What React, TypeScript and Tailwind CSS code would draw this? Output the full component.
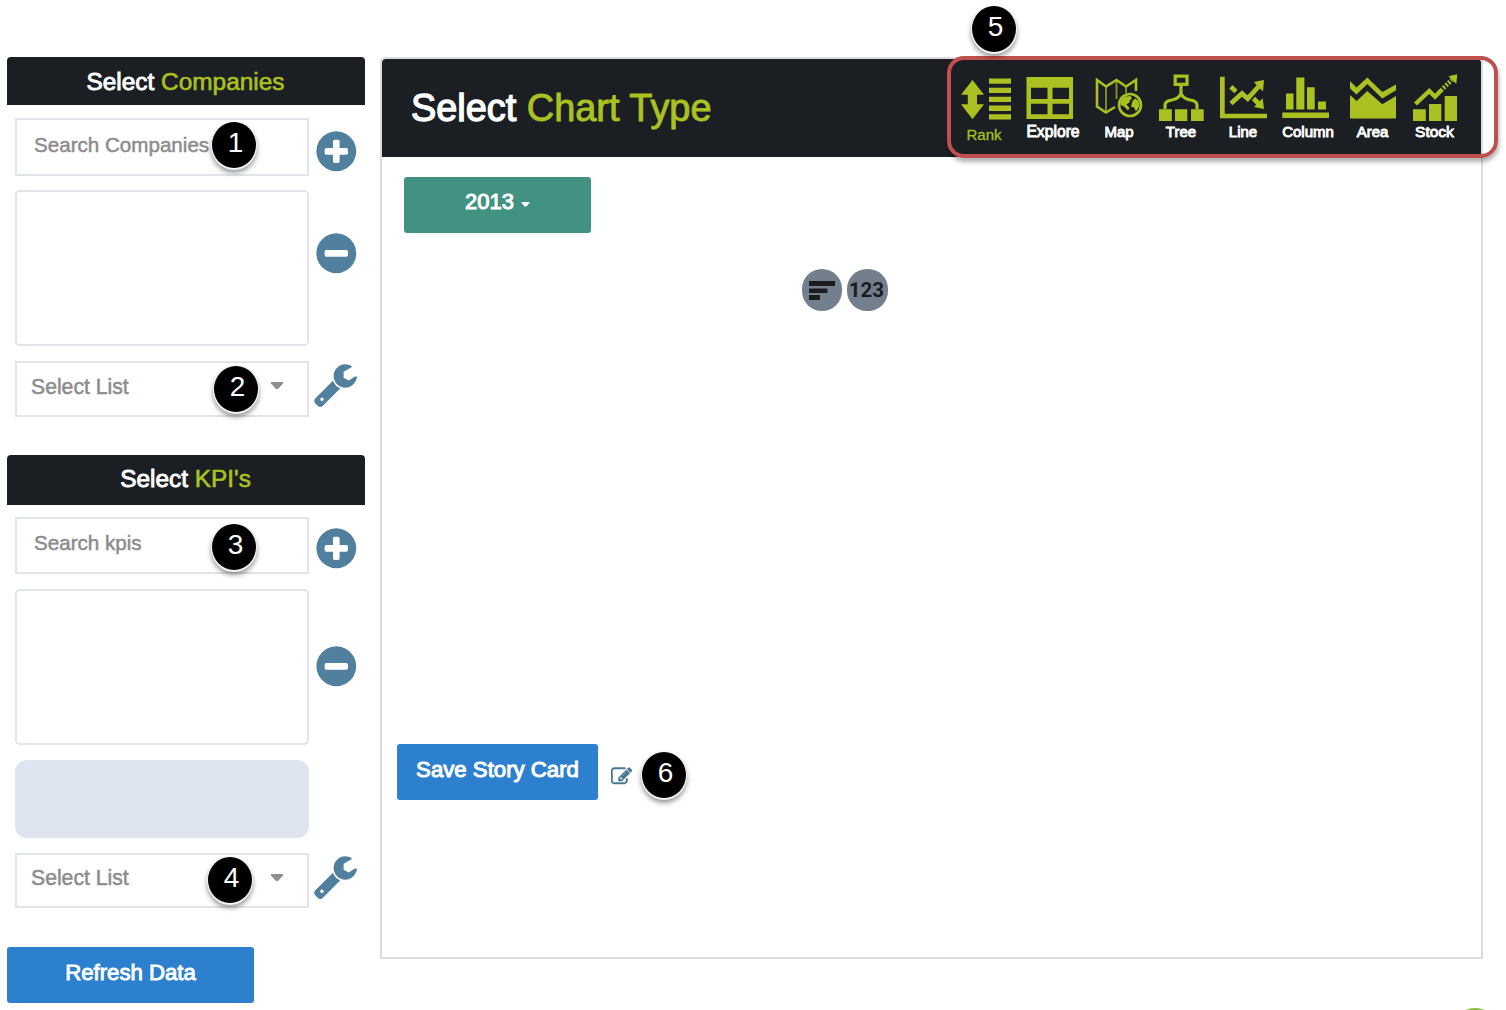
import type { ReactNode } from "react";

const PLUS =
  "M1344 960v-128q0-26-19-45t-45-19h-256v-256q0-26-19-45t-45-19h-128q-26 0-45 19t-19 45v256h-256q-26 0-45 19t-19 45v128q0 26 19 45t45 19h256v256q0 26 19 45t45 19h128q26 0 45-19t19-45v-256h256q26 0 45-19t19-45zm320-64q0 209-103 385.5t-279.5 279.5-385.5 103-385.5-103-279.5-279.5-103-385.5 103-385.5 279.5-279.5 385.5-103 385.5 103 279.5 279.5 103 385.5z";
const MINUS =
  "M1344 960v-128q0-26-19-45t-45-19h-768q-26 0-45 19t-19 45v128q0 26 19 45t45 19h768q26 0 45-19t19-45zm320-64q0 209-103 385.5t-279.5 279.5-385.5 103-385.5-103-279.5-279.5-103-385.5 103-385.5 279.5-279.5 385.5-103 385.5 103 279.5 279.5 103 385.5z";
const WRENCH =
  "M448 1472q0-26-19-45t-45-19-45 19-19 45 19 45 45 19 45-19 19-45zm644-420l-682 682q-37 37-90 37-52 0-91-37l-106-108q-38-36-38-90 0-53 38-91l681-681q39 98 114.5 173.5t173.5 114.5zm634-435q0 39-23 106-47 134-164.5 217.5t-258.5 83.5q-185 0-316.5-131.5t-131.5-316.5 131.5-316.5 316.5-131.5q58 0 121.5 16.5t107.5 46.5q16 11 16 28t-16 28l-293 169v224l193 107q5-3 79-48.5t135.5-81 70.5-35.5q15 0 23.5 10t8.5 25z";
const EDIT =
  "M888 1184l116-116-152-152-116 116v56h96v96h56zm440-720q-16-16-33 1l-350 350q-17 17-1 33t33-1l350-350q17-17 1-33zm80 594v190q0 119-84.5 203.5t-203.5 84.5h-832q-119 0-203.5-84.5t-84.5-203.5v-832q0-119 84.5-203.5t203.5-84.5h832q63 0 117 25 15 7 18 23 3 17-9 29l-49 49q-14 14-32 8-23-6-45-6h-832q-66 0-113 47t-47 113v832q0 66 47 113t113 47h832q66 0 113-47t47-113v-126q0-13 9-22l64-64q15-15 35-7t20 29zm-96-738l288 288-672 672h-288v-288zm444 132l-92 92-288-288 92-92q28-28 68-28t68 28l152 152q28 28 28 68t-28 68z";

function Glyph({ d, className }: { d: string; className: string }) {
  return (
    <svg viewBox="0 0 1792 1792" fill="currentColor" className={`shrink-0 text-[#51809f] ${className}`}>
      <path d={d} />
    </svg>
  );
}

function Badge({ n, className }: { n: number; className: string }) {
  return (
    <div
      className={`absolute flex h-[46px] w-[44px] items-center justify-center rounded-[50%] bg-black pb-[4px] pl-[3px] text-[28px] leading-none text-white shadow-[0_1px_0_1px_#f4f4f4,0_4px_5px_1px_rgba(0,0,0,0.4)] ${className}`}
    >
      {n}
    </div>
  );
}

function PanelTitle({ accent, className }: { accent: string; className: string }) {
  return (
    <h2
      className={`w-[358px] rounded-t-[4px] bg-[#1b1e23] pr-[1px] text-center text-[24.4px] text-white [-webkit-text-stroke:0.9px] ${className}`}
    >
      Select <span className="text-[#abc122] [-webkit-text-stroke:0.6px]">{accent}</span>
    </h2>
  );
}

function SelectBox({ className }: { className: string }) {
  return (
    <div
      className={`flex w-[294px] justify-between border-2 border-[#e1e5e9] pr-[24px] pl-[14px] text-[21.2px] text-[#8c8c8c] [-webkit-text-stroke:0.5px] ${className}`}
    >
      <span>Select List</span>
      <svg viewBox="0 0 12 7" className="mt-[19px] h-[7px] w-[12px]">
        <path d="M0 0H12V1.5L7 7H5L0 1.5Z" fill="#8f8f8f" />
      </svg>
    </div>
  );
}

const charts: { label: string; box: string; width: string; text: string; art: ReactNode }[] = [
  {
    label: "Rank",
    box: "949 70 70 54",
    width: "w-[70px]",
    text: "mt-[3px] text-[15px] text-[#abc122] [-webkit-text-stroke:0.3px]",
    art: (
      <>
        <path d="M972.5 80L984 94.8H977V104.3H984L972.5 119.2L961 104.3H967.8V94.8H961Z" />
        <path d="M989 78.5h22v5.3h-22zM989 87.7h22v5.3h-22zM989 96.7h22v5.3h-22zM989 105.6h22v5.3h-22zM989 114.3h22v5.3h-22z" />
      </>
    ),
  },
  {
    label: "Explore",
    box: "1019 70 68 54",
    width: "w-[68px]",
    text: "text-[15.7px] text-white [-webkit-text-stroke:0.9px]",
    art: (
      <path
        fillRule="evenodd"
        d="M1026.5 77H1073V119H1026.5ZM1031 87.7V99H1047.5V87.7ZM1052.5 87.7V99H1069V87.7ZM1031 103.8V114.3H1047.5V103.8ZM1052.5 103.8V114.3H1069V103.8Z"
      />
    ),
  },
  {
    label: "Map",
    box: "1087 70 64 54",
    width: "w-[64px]",
    text: "text-[15px] text-white [-webkit-text-stroke:0.9px]",
    art: (
      <>
        <path
          d="M1115 107L1106 112.5L1097 106.5V80L1106 86.5L1116.5 80L1126 86.5L1136 80V91"
          fill="none"
          stroke="currentColor"
          strokeWidth="2.6"
        />
        <path d="M1106 86V112M1116.5 80V99" fill="none" stroke="currentColor" strokeWidth="1.8" opacity=".75" />
        <path d="M1126 86V93" fill="none" stroke="currentColor" strokeWidth="1.8" opacity=".75" />
        <circle cx="1130" cy="105" r="11" fill="none" stroke="currentColor" strokeWidth="2.6" />
        <path d="M1121 100.5L1125 96.5L1130.5 96L1132 98.5L1129.5 100.5L1130 102L1126.5 104.5L1129.5 108L1128 110.5L1124 106.5L1120.5 105ZM1132.5 101L1135 98.5L1138.5 101L1139.5 106L1136 111.5L1134 107.5L1131 106.5Z" />
      </>
    ),
  },
  {
    label: "Tree",
    box: "1151 70 60 54",
    width: "w-[60px]",
    text: "text-[15px] text-white [-webkit-text-stroke:0.9px]",
    art: (
      <>
        <path
          d="M1175.2 76.2H1187V84.3H1175.2ZM1181 85V95M1165 109V105Q1165 101 1172 100Q1180 98 1181 93Q1182 98 1190 100Q1197 101 1197 105V109"
          fill="none"
          stroke="currentColor"
          strokeWidth="3.2"
        />
        <path d="M1159 109.3H1171.8V121H1159ZM1175 109.3H1187.3V121H1175ZM1191 109.3H1203.7V121H1191Z" />
      </>
    ),
  },
  {
    label: "Line",
    box: "1211 70 64 54",
    width: "w-[64px]",
    text: "text-[15px] text-white [-webkit-text-stroke:0.9px]",
    art: (
      <>
        <path d="M1220 76.8H1224.7V113.7H1267V118.3H1220Z" />
        <path
          d="M1231 103.5L1242 93.5L1247.7 98.7L1260 85M1230.8 86.8L1236 91.5M1253.5 98.5L1260 105"
          fill="none"
          stroke="currentColor"
          strokeWidth="4.8"
        />
        <path d="M1264 80L1253.8 82L1263 91.5ZM1264 109L1254 107L1262.7 98.3Z" />
      </>
    ),
  },
  {
    label: "Column",
    box: "1275 70 66 54",
    width: "w-[66px]",
    text: "text-[15px] text-white [-webkit-text-stroke:0.9px]",
    art: (
      <path d="M1286 93.5H1293.5V109.6H1286ZM1296.3 77.6H1304.4V109.6H1296.3ZM1307 87.3H1314.7V109.6H1307ZM1318 101.6H1326V109.6H1318ZM1282.3 112.5H1329V118H1282.3Z" />
    ),
  },
  {
    label: "Area",
    box: "1341 70 63 54",
    width: "w-[63px]",
    text: "text-[15px] text-white [-webkit-text-stroke:0.9px]",
    art: (
      <path d="M1350 81L1356.5 87.5L1367.3 77.5L1382.3 92L1396 84.5V90.3L1382.3 98.5L1367.3 84L1356.5 94.5L1350 88.5ZM1350 95L1356.7 101L1367.3 91L1382.3 104.3L1396 96V118.5H1350Z" />
    ),
  },
  {
    label: "Stock",
    box: "1404 70 61 54",
    width: "w-[61px]",
    text: "text-[15.5px] text-white [-webkit-text-stroke:0.9px]",
    art: (
      <>
        <path d="M1413 109.3H1425.8V121H1413ZM1429 104H1441.3V121H1429ZM1444.7 96H1457V121H1444.7ZM1457.3 74.3L1448.5 76.3L1456.3 84Z" />
        <path d="M1415.5 104L1429.3 91L1435 96.7L1442.3 89.2" fill="none" stroke="currentColor" strokeWidth="4.4" />
        <path d="M1443.3 88L1452 79.8" fill="none" stroke="currentColor" strokeWidth="4.6" strokeDasharray="2 1.6" />
      </>
    ),
  },
];

export default function App() {
  return (
    <div className="relative flex h-[1010px] w-[1506px] items-start overflow-hidden bg-white font-['Liberation_Sans',Arial,sans-serif]">
      <aside className="ml-[7px] w-[358px] shrink-0 pt-[57px]">
        <PanelTitle accent="Companies" className="h-[48px] leading-[49px]" />
        <div className="mt-[13px] ml-[8px] flex h-[58px] items-start">
          <div className="h-[58px] w-[294px] border-2 border-[#e1e5e9] pl-[17px] text-[20.6px] leading-[50px] text-[#8c8c8c] [-webkit-text-stroke:0.5px]">
            Search Companies
          </div>
          <Glyph d={PLUS} className="mt-[10px] ml-[4px] size-[46.6px]" />
        </div>
        <div className="mt-[14px] ml-[8px] flex h-[156px] items-start">
          <div className="h-[156px] w-[294px] rounded-[5px] border-2 border-[#e1e5e9]" />
          <Glyph d={MINUS} className="mt-[40px] ml-[4px] size-[46.6px]" />
        </div>
        <div className="mt-[15px] ml-[8px] flex h-[56px] items-start">
          <SelectBox className="h-[56px] leading-[47px]" />
          <Glyph d={WRENCH} className="ml-[2.5px] size-[46.6px]" />
        </div>

        <PanelTitle accent="KPI's" className="mt-[38px] h-[50px] leading-[48px]" />
        <div className="mt-[12px] ml-[8px] flex h-[57px] items-start">
          <div className="h-[57px] w-[294px] border-2 border-[#e1e5e9] pl-[17px] text-[20.6px] leading-[47px] text-[#8c8c8c] [-webkit-text-stroke:0.5px]">
            Search kpis
          </div>
          <Glyph d={PLUS} className="mt-[8px] ml-[4px] size-[46.6px]" />
        </div>
        <div className="mt-[15px] ml-[8px] flex h-[156px] items-start">
          <div className="h-[156px] w-[294px] rounded-[5px] border-2 border-[#e1e5e9]" />
          <Glyph d={MINUS} className="mt-[54px] ml-[4px] size-[46.6px]" />
        </div>
        <div className="mt-[15px] ml-[8px] h-[78px] w-[294px] rounded-[12px] bg-[#dee5f1]" />
        <div className="mt-[15px] ml-[8px] flex h-[55px] items-start">
          <SelectBox className="h-[55px] leading-[46px]" />
          <Glyph d={WRENCH} className="ml-[2.5px] size-[46.6px]" />
        </div>
        <button className="mt-[39px] block h-[56px] w-[247px] rounded-[3px] bg-[#2d80cd] pb-[5px] text-center text-[22.2px] text-white [-webkit-text-stroke:0.9px]">
          Refresh Data
        </button>
      </aside>

      <main className="mt-[57px] ml-[15px] h-[902px] w-[1103px] shrink-0 rounded-t-[5px] border-2 border-[#dcdcdc]">
        <header className="flex h-[98px] items-start justify-between rounded-t-[4px] bg-[#1b1e23] pl-[29px]">
          <h1 className="text-[37.9px] leading-[98px] text-white [-webkit-text-stroke:1.3px]">
            Select <span className="text-[#abc122] [-webkit-text-stroke:0.9px]">Chart Type</span>
          </h1>
          <nav className="mr-[16px] flex pt-[11px]">
            {charts.map((c) => (
              <div key={c.label} className={`flex shrink-0 flex-col items-center text-[#abc122] ${c.width}`}>
                <svg viewBox={c.box} fill="currentColor" className="h-[54px] w-full">
                  {c.art}
                </svg>
                <span className={`leading-[16px] ${c.text}`}>{c.label}</span>
              </div>
            ))}
          </nav>
        </header>
        <button className="mt-[20px] ml-[22px] flex h-[56px] w-[187px] items-center justify-center rounded-[3px] bg-[#419282] pb-[8px] text-[22px] text-white [-webkit-text-stroke:1px]">
          2013
          <svg viewBox="0 0 9 5" className="mt-[7px] ml-[7px] h-[5px] w-[9px]">
            <path d="M0 0H9L5.5 4.5H3.5Z" fill="white" />
          </svg>
        </button>
        <div className="mt-[36px] ml-[420px] flex gap-[5px]">
          <div className="flex h-[42px] w-[40px] items-center justify-center rounded-[20px] bg-[#747f8d]">
            <svg viewBox="0 0 26 19" className="h-[19px] w-[26px]">
              <path d="M0 0H26V5H0ZM0 7.5H18.5V12H0ZM0 14H11V19H0Z" fill="#1b1b1f" />
            </svg>
          </div>
          <div className="flex h-[42px] w-[41px] items-center justify-center rounded-[20px] bg-[#747f8d] pr-[2px] font-['Roboto',sans-serif] text-[20.5px] font-bold text-[#1b1b1f]">
            123
          </div>
        </div>
        <div className="mt-[433px] ml-[15px] flex items-center">
          <button className="h-[56px] w-[201px] rounded-[3px] bg-[#2d80cd] pb-[4px] text-[22.2px] text-white [-webkit-text-stroke:1px]">
            Save Story Card
          </button>
          <svg
            viewBox="0 0 1792 1792"
            fill="#467590"
            stroke="#467590"
            strokeWidth="40"
            className="mt-[8px] ml-[13px] size-[21px]"
          >
            <path d={EDIT} />
          </svg>
        </div>
      </main>

      <div className="absolute top-[56px] left-[947px] h-[102px] w-[551px] rounded-[17px] border-4 border-[#c0504d] shadow-[1px_4px_4px_rgba(0,0,0,0.3)]" />
      <Badge n={1} className="top-[122px] left-[212px]" />
      <Badge n={2} className="top-[366px] left-[214px]" />
      <Badge n={3} className="top-[524px] left-[212px]" />
      <Badge n={4} className="top-[857px] left-[208px]" />
      <Badge n={5} className="top-[6px] left-[972px]" />
      <Badge n={6} className="top-[752px] left-[642px]" />
      <div className="absolute top-[1007.5px] left-[1450px] size-[50px] rounded-full bg-[#86b93b]" />
    </div>
  );
}
